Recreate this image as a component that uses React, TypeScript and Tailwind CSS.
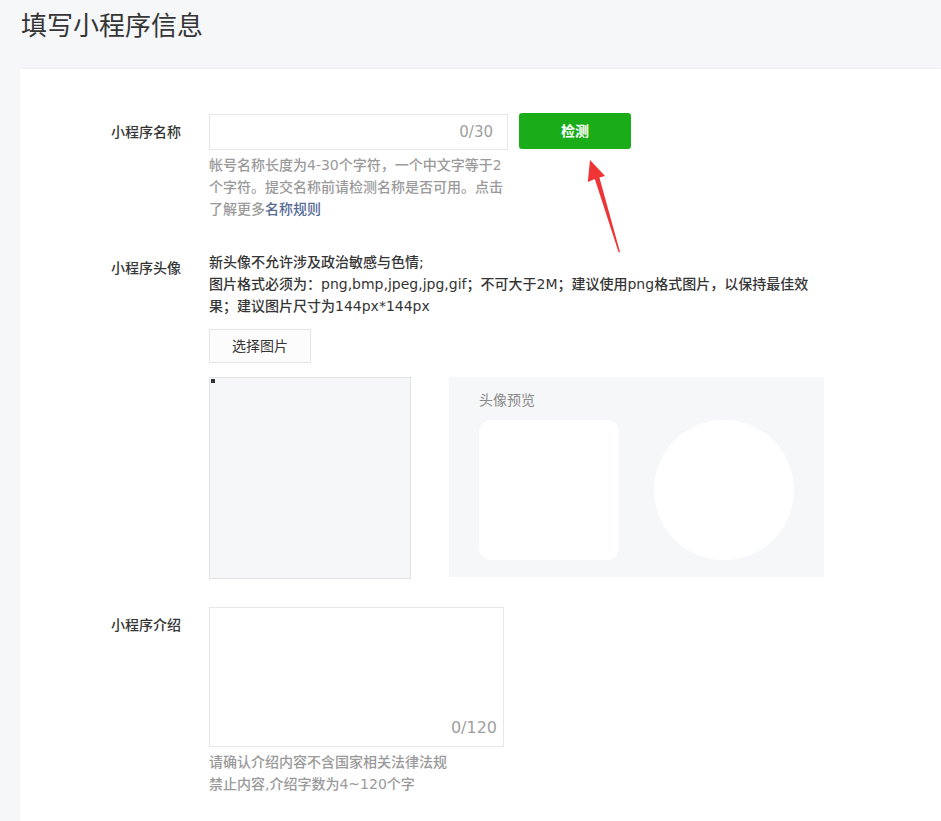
import React from 'react';

const font = { fontFamily: '"DejaVu Sans", "Noto Sans CJK SC", sans-serif' };
const cjk = { fontFamily: '"Noto Sans CJK SC", sans-serif' };

export default function App() {
  return (
    <div className="min-h-[821px] bg-[#f6f7f9] text-[#353535]" style={font}>
      {/* Page title */}
      <h1 className="pl-[21px] pt-[6px] text-[26px] leading-[36px] font-normal" style={cjk}>填写小程序信息</h1>

      {/* Form card */}
      <div className="relative ml-[20px] mt-[27px] min-h-[752px] bg-white pl-[91px] pt-[45px] shadow-[0_-1px_2px_rgba(0,0,0,0.04)]">
        {/* Name */}
        <div className="flex">
          <label className="w-[98px] shrink-0 pt-[7px] text-[14px] leading-[22px] font-medium">小程序名称</label>
          <div>
            <div className="flex items-start gap-[11px]">
              <div className="flex h-[36px] w-[299px] items-center justify-end border border-[#e7e7eb] bg-white pr-[14px] text-[15px] text-[#a0a0a0]">
                0/30
              </div>
              <button className="-mt-px h-[36px] w-[112px] rounded-[3px] bg-[#1aad19] text-[14px] font-bold text-white">检测</button>
            </div>
            <p className="mt-[4px] w-[302px] text-[14px] leading-[22px] text-[#9a9a9a] font-medium">
              帐号名称长度为4-30个字符，一个中文字等于2个字符。提交名称前请检测名称是否可用。点击了解更多<span className="text-[#576b95]">名称规则</span>
            </p>
          </div>
        </div>

        {/* Avatar */}
        <div className="mt-[31px] flex">
          <label className="w-[98px] shrink-0 pt-[6px] text-[14px] leading-[22px] font-medium">小程序头像</label>
          <div className="w-[616px]">
            <p className="text-[14px] leading-[22px] font-medium">新头像不允许涉及政治敏感与色情;</p>
            <p className="text-[14px] leading-[22px] font-medium">
              图片格式必须为：png,bmp,jpeg,jpg,gif；不可大于2M；建议使用png格式图片，以保持最佳效果；建议图片尺寸为144px*144px
            </p>
            <button className="mt-[12px] h-[34px] w-[102px] border border-[#e5e5e5] bg-[#fcfcfc] text-[14px] font-normal">选择图片</button>
            <div className="mt-[14px] flex items-start gap-[38px]">
              <div className="relative h-[202px] w-[202px] border border-[#e2e2e2] bg-[#f6f7f9]">
                <div className="absolute left-[1px] top-[1px] h-[4px] w-[4px] bg-[#333]" />
              </div>
              <div className="h-[200px] w-[375px] bg-[#f6f7f9] px-[30px] pt-[12px]">
                <p className="text-[14px] leading-[22px] text-[#8a8a8a] font-normal">头像预览</p>
                <div className="mt-[9px] flex gap-[35px]">
                  <div className="h-[140px] w-[140px] rounded-[12px] bg-white" />
                  <div className="h-[140px] w-[140px] rounded-full bg-white" />
                </div>
              </div>
            </div>
          </div>
        </div>

        {/* Intro */}
        <div className="mt-[28px] flex pb-[40px]">
          <label className="w-[98px] shrink-0 pt-[7px] text-[14px] leading-[22px] font-medium">小程序介绍</label>
          <div>
            <div className="flex h-[140px] w-[295px] items-end justify-end border border-[#e7e7eb] pb-[6px] pr-[6px] text-[16px] text-[#a0a0a0]">
              0/120
            </div>
            <p className="mt-[4px] text-[14px] leading-[22px] text-[#9a9a9a] font-medium">请确认介绍内容不含国家相关法律法规</p>
            <p className="text-[14px] leading-[22px] text-[#9a9a9a] font-medium">禁止内容,介绍字数为4~120个字</p>
          </div>
        </div>

        {/* Annotation arrow pointing at the check button */}
        <svg className="pointer-events-none absolute left-[530px] top-[81px]" width="90" height="110" viewBox="550 150 90 110">
          <polygon
            points="590,160 605,176 599.4,177.6 620,252 618.6,252.3 594.8,179 587.8,182"
            fill="#ee3434"
          />
        </svg>
      </div>
    </div>
  );
}
